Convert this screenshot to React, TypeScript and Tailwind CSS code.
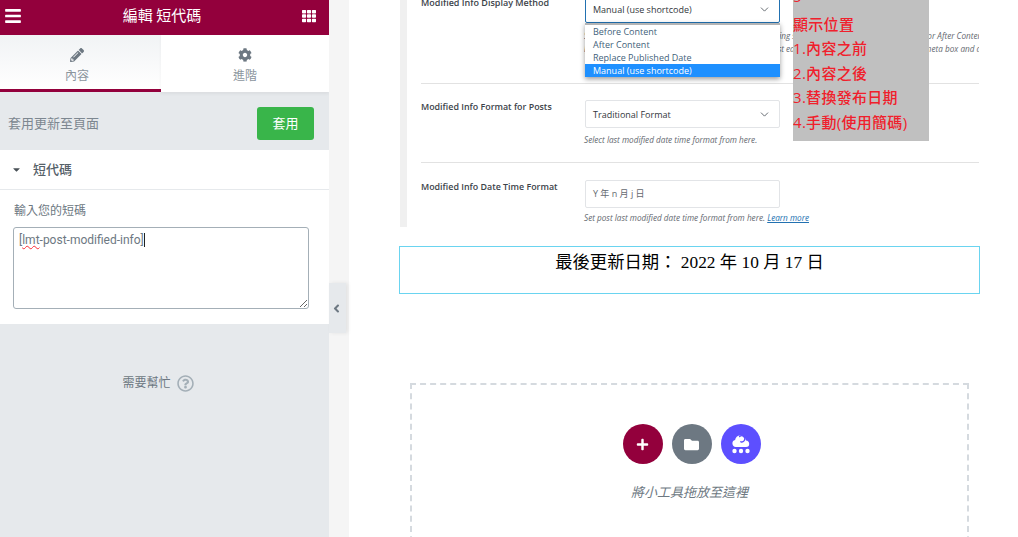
import React from 'react';
import { ChevronDown } from 'lucide-react';
import {
  FaAngleLeft,
  FaBars,
  FaCaretDown,
  FaCog,
  FaFolder,
  FaPencilAlt,
  FaPlus,
  FaRegQuestionCircle,
  FaTh,
} from 'react-icons/fa';

const uiFont = "font-['Roboto','Noto_Sans_CJK_TC',sans-serif]";
const shotFont = "font-['Open_Sans','Noto_Sans_CJK_TC',sans-serif]";

const options = ['Before Content', 'After Content', 'Replace Published Date'];
const notes = ['顯示位置', '1.內容之前', '2.內容之後', '3.替換發布日期', '4.手動(使用簡碼)'];

function KitIcon() {
  return (
    <svg width="22" height="22" viewBox="0 0 22 22" fill="white">
      <path d="M5.8 14a3.5 3.5 0 0 1-.7-6.9A5.4 5.4 0 0 1 10.4 2.4c3 0 5.2 2.2 5.6 5 1.9.2 3.2 1.5 3.2 3.3a3.2 3.2 0 0 1-3.2 3.3z" />
      <path d="M9.6 3.6a3.1 3.1 0 1 1 1.2 5.2" fill="none" stroke="#5d4fff" strokeWidth="1.4" strokeLinecap="round" />
      <circle cx="4.5" cy="18" r="2.2" />
      <circle cx="11" cy="18" r="2.2" />
      <circle cx="17.5" cy="18" r="2.2" />
    </svg>
  );
}

function SelectBox({ label, active }: { label: string; active?: boolean }) {
  return (
    <div
      className={`flex h-[28px] w-[195px] items-center justify-between rounded-[2px] border bg-white pl-[7px] pr-[8px] pt-[1px] text-[9px] text-[#32373c] ${
        active ? 'border-[#2271b1]' : 'border-[#e2e4e7]'
      }`}
    >
      <span>{label}</span>
      <ChevronDown size={13} strokeWidth={1.6} className="text-[#50575e]" />
    </div>
  );
}

function ScreenshotPanel() {
  return (
    <div className={`relative h-[227px] overflow-hidden border-l-[7px] border-[#f0f0f0] bg-white ${shotFont}`}>
      <div className="ml-[14px] mr-[1px]">
        <div className="flex h-[84px] border-b border-[#e2e2e2]">
          <div className="w-[164px] text-[9px] leading-[12px] font-semibold text-[#3c434a] -mt-[3px]">
            Modified Info Display Method
          </div>
          <div className="-mt-[5px] w-[394px]">
            <SelectBox label="Manual (use shortcode)" active />
            <div className="mt-[6px] -ml-[1px] overflow-hidden whitespace-nowrap text-[8.2px] leading-[13px] italic text-[#646970]">
              <div>Select how you want to display the modified info by using shortcode, Before Content, New Date or After Content</div>
              <div>If you select the shortcode option, you can use it in post editor, in widget or post meta, or post meta box and app</div>
            </div>
          </div>
        </div>
        <div className="flex h-[79px] border-b border-[#e2e2e2] pt-[16px]">
          <div className="w-[164px] pt-[1px] text-[8.9px] leading-[12px] font-semibold text-[#3c434a]">
            Modified Info Format for Posts
          </div>
          <div>
            <SelectBox label="Traditional Format" />
            <div className="mt-[6px] -ml-[1px] text-[8.2px] leading-[12px] italic text-[#646970]">
              Select last modified date time format from here.
            </div>
          </div>
        </div>
        <div className="flex pt-[17px]">
          <div className="w-[164px] pt-[1px] text-[8.9px] leading-[12px] font-semibold text-[#3c434a]">
            Modified Info Date Time Format
          </div>
          <div>
            <div className="flex h-[28px] w-[195px] items-center rounded-[2px] border border-[#e2e4e7] pl-[7px] text-[9px] text-[#646970]">
              Y 年 n 月 j 日
            </div>
            <div className="mt-[4px] -ml-[1px] text-[8.2px] leading-[12px] italic text-[#646970]">
              Set post last modified date time format from here.{' '}
              <span className="text-[#2271b1] underline">Learn more</span>
            </div>
          </div>
        </div>
      </div>

      {/* open native dropdown, sits over the hint text */}
      <div className="absolute left-[178px] top-[23px] w-[195px] border-t-2 border-[#b4b4b4] bg-white text-[9px] leading-[13px] text-[#3f5f7a] shadow-[0_2px_5px_rgba(0,0,0,0.4)]">
        {options.map((o) => (
          <div key={o} className="pl-[8px]">
            {o}
          </div>
        ))}
        <div className="bg-[#1e90ff] pl-[8px] text-white">Manual (use shortcode)</div>
      </div>

      {/* annotation pasted over the screenshot */}
      <div className="absolute left-[386px] top-0 h-[141px] w-[136px] overflow-hidden bg-[#c0c0c0] text-[15px] leading-[24.5px] font-medium tracking-[0.3px] text-[#f0202c]">
        <div className="-mt-[16px] mb-[3px]">5</div>
        <div>
          {notes.map((n) => (
            <div key={n}>{n}</div>
          ))}
        </div>
      </div>
    </div>
  );
}

export default function App() {
  return (
    <div className={`flex h-[537px] w-[1018px] overflow-hidden bg-white ${uiFont}`}>
      <aside className="flex h-full w-[329px] shrink-0 flex-col bg-[#e6e9ec]">
        <header className="flex h-[35px] items-center justify-between bg-[#93003c] pb-[3px] pl-[4px] pr-[13px] text-white">
          <FaBars size={18} />
          <span className="text-[15px]">編輯 短代碼</span>
          <FaTh size={14} />
        </header>
        <nav className="flex h-[57px] bg-white text-[12px] text-[#a4afb7]">
          <div className="flex w-[161px] flex-col items-center border-b-[3px] border-[#93003c] bg-gradient-to-b from-[#f1f3f5] to-white pr-[7px] pt-[13px]">
            <FaPencilAlt size={14} className="text-[#6d7882]" />
            <span className="mt-[4px] leading-[20px] text-[#8b959d]">內容</span>
          </div>
          <div className="flex flex-1 flex-col items-center pt-[13px] shadow-[0_2px_3px_rgba(0,0,0,0.05)]">
            <FaCog size={14} className="text-[#6d7882]" />
            <span className="mt-[4px] leading-[20px] text-[#8b959d]">進階</span>
          </div>
        </nav>
        <div className="flex h-[58px] items-center justify-between pl-[8px] pr-[15px] pt-[5px] text-[13px] text-[#7d8790]">
          <span>套用更新至頁面</span>
          <button className="h-[33px] w-[57px] rounded-[3px] bg-[#39b54a] text-[13px] text-white">套用</button>
        </div>
        <section className="h-[174px] bg-white">
          <div className="flex h-[40px] items-center border-b border-[#e6e9ec] pl-[11px] text-[13px] font-medium text-[#556068]">
            <FaCaretDown size={11} className="text-[#495157]" />
            <span className="ml-[11px]">短代碼</span>
          </div>
          <div className="px-[13px] pt-[13px]">
            <div className="pl-[1px] text-[12px] leading-[16px] text-[#6d7882]">輸入您的短碼</div>
            <div className="mt-[8px] h-[82px] w-[296px] resize overflow-auto rounded-[3px] border border-[#a4afb7] px-[5px] pt-[4px] text-[12px] leading-[17px] text-[#6d7882]">
              [<span className="underline decoration-red-500 decoration-wavy decoration-1">lmt</span>
              -post-modified-info]<span className="border-r border-[#222]" />
            </div>
          </div>
        </section>
        <div className="mt-[50px] flex items-center justify-center gap-[6px] pr-[13px] text-[12px] text-[#6d7882]">
          <span>需要幫忙</span>
          <FaRegQuestionCircle size={17} className="text-[#a4afb7]" />
        </div>
      </aside>

      <div className="relative w-[20px] shrink-0 bg-[#f5f5f5]">
        <div className="absolute left-0 top-[283px] flex h-[50px] w-[17px] items-center justify-center bg-[#e6e9ec] pr-[2px] text-[#6d7882] shadow-[2px_0_4px_rgba(0,0,0,0.08)]">
          <FaAngleLeft size={13} />
        </div>
      </div>

      <main className="w-[580px] shrink-0 ml-[51px]">
        <ScreenshotPanel />
        <div className="-ml-[1px] mt-[19px] h-[48px] w-[581px] border border-[#6ad4f0] pt-[2px] text-center font-['Liberation_Serif','Noto_Sans_CJK_TC',serif] text-[17.33px] leading-[28px] text-black">
          最後更新日期： 2022 年 10 月 17 日
        </div>
        <div className="ml-[10px] mt-[89px] h-[200px] w-[559px] border-2 border-dashed border-[#d5dadf] pt-[39px]">
          <div className="flex justify-center gap-[9px] pl-[4px]">
            <span className="flex h-[40px] w-[40px] items-center justify-center rounded-full bg-[#93003c] text-white">
              <FaPlus size={13} />
            </span>
            <span className="flex h-[40px] w-[40px] items-center justify-center rounded-full bg-[#6d7882] text-white">
              <FaFolder size={15} />
            </span>
            <span className="flex h-[40px] w-[40px] items-center justify-center rounded-full bg-[#5d4fff]">
              <KitIcon />
            </span>
          </div>
          <div className="mt-[19px] text-center text-[13px] italic text-[#6d7882]">將小工具拖放至這裡</div>
        </div>
      </main>
    </div>
  );
}
